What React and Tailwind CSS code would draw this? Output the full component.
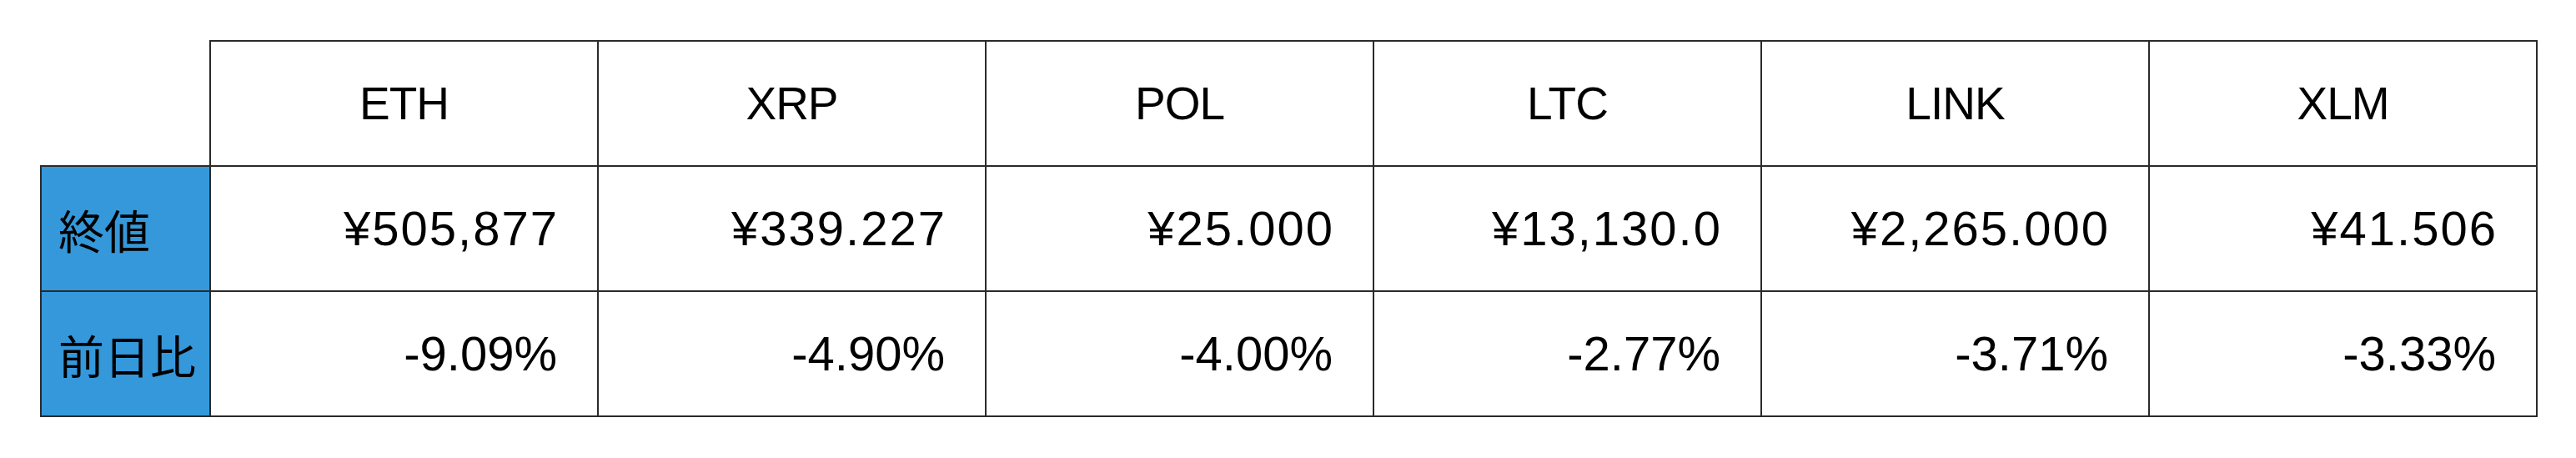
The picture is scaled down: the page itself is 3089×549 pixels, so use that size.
import React from "react";

const coins = ["ETH", "XRP", "POL", "LTC", "LINK", "XLM"];
const closes = ["¥505,877", "¥339.227", "¥25.000", "¥13,130.0", "¥2,265.000", "¥41.506"];
const changes = ["-9.09%", "-4.90%", "-4.00%", "-2.77%", "-3.71%", "-3.33%"];

const latin = { fontFamily: '"Liberation Sans", Arial, "Noto Sans CJK JP", sans-serif' };
const jp = { fontFamily: '"Noto Sans CJK JP", "Liberation Sans", sans-serif' };

export default function App() {
  return (
    <div className="w-[3089px] h-[549px] bg-white pt-[48px] pl-[48px]">
      <table className="table-fixed border-collapse w-[2993px] text-black" style={latin}>
        <colgroup>
          <col className="w-[203px]" />
          {coins.map((c) => (
            <col key={c} className="w-[465px]" />
          ))}
        </colgroup>
        <thead>
          <tr className="h-[150px]">
            <th className="border-0 bg-white"></th>
            {coins.map((c) => (
              <th
                key={c}
                className="border-2 border-[#2a2a2a] text-center align-middle font-normal text-[55px] tracking-[-1px] leading-none"
              >
                {c}
              </th>
            ))}
          </tr>
        </thead>
        <tbody>
          <tr className="h-[150px]">
            <td
              className="border-2 border-[#2a2a2a] bg-[#3498db] pl-[20px] align-middle text-[55px] leading-none"
              style={jp}
            >
              終値
            </td>
            {closes.map((v, i) => (
              <td
                key={i}
                className="border-2 border-[#2a2a2a] text-right pr-[46px] align-middle text-[58px] tracking-[2px] leading-none"
              >
                {v}
              </td>
            ))}
          </tr>
          <tr className="h-[150px]">
            <td
              className="border-2 border-[#2a2a2a] bg-[#3498db] pl-[20px] align-middle text-[55px] leading-none"
              style={jp}
            >
              前日比
            </td>
            {changes.map((v, i) => (
              <td
                key={i}
                className="border-2 border-[#2a2a2a] text-right pr-[48px] align-middle text-[58px] leading-none"
              >
                {v}
              </td>
            ))}
          </tr>
        </tbody>
      </table>
    </div>
  );
}
